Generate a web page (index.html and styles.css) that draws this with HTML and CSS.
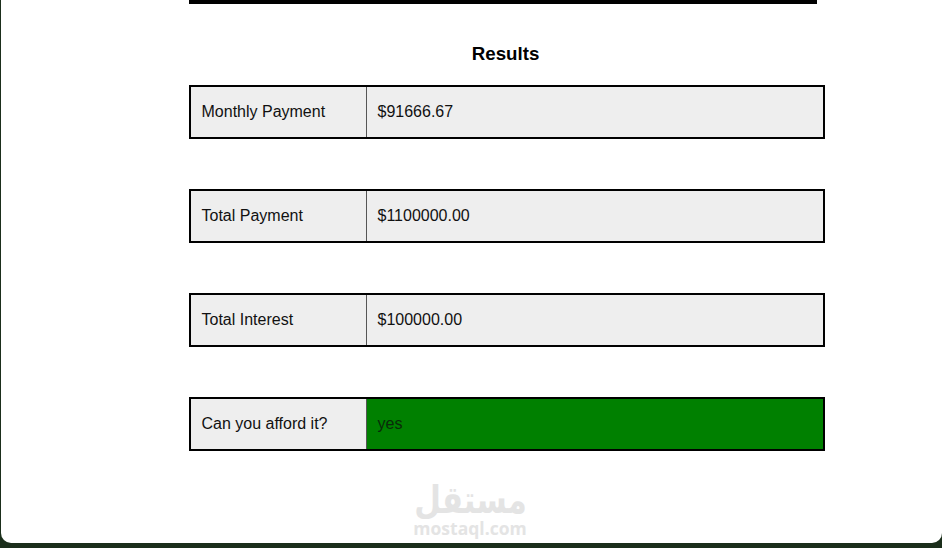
FILE: index.html
```html
<!DOCTYPE html>
<html lang="en">
<head>
<meta charset="utf-8">
<title>Results</title>
<link rel="stylesheet" href="styles.css">
</head>
<body>
<main class="card">
  <section class="content">
    <div class="rule"></div>
    <h2 class="title">Results</h2>
    <div class="row">
      <div class="label">Monthly Payment</div>
      <div class="value">$91666.67</div>
    </div>
    <div class="row">
      <div class="label">Total Payment</div>
      <div class="value">$1100000.00</div>
    </div>
    <div class="row">
      <div class="label">Total Interest</div>
      <div class="value">$100000.00</div>
    </div>
    <div class="row">
      <div class="label">Can you afford it?</div>
      <div class="value value-yes">yes</div>
    </div>
  </section>
  <div class="watermark">
    <div class="wm-ar" lang="ar" dir="rtl">مستقل</div>
    <div class="wm-en">mostaql.com</div>
  </div>
</main>
</body>
</html>
```

FILE: styles.css
```css
* { box-sizing: border-box; }
html, body { margin: 0; height: 100%; }
body {
  background: #1b2e1b;
  padding: 0 0 5px 1px;
  overflow: hidden;
  font-family: "Liberation Sans", Arial, sans-serif;
  color: #111;
}
.card {
  position: relative;
  height: 543px;
  background: #fff;
  border-radius: 0 0 10px 10px;
  padding-left: 188px;
}
.content {
  width: 636px;
  display: flex;
  flex-direction: column;
}
.rule {
  width: 627.5px;
  height: 4px;
  background: #000;
}
.title {
  margin: 39px 0 21px;
  padding-right: 3px;
  font-size: 18.72px;
  line-height: 21px;
  font-weight: 700;
  text-align: center;
  color: #000;
}
.row {
  display: flex;
  height: 54px;
  margin-bottom: 50px;
  border: 2px solid #000;
  background: #eee;
  font-size: 16px;
}
.label {
  width: 176px;
  padding: 0 0 0 10.5px;
  display: flex;
  align-items: center;
  border-right: 1.5px solid #555;
}
.value {
  flex: 1;
  padding: 0 0 0 10.5px;
  display: flex;
  align-items: center;
}
.value-yes { background: #008000; color: #0a2a0a; }
.watermark {
  position: absolute;
  left: 410px;
  top: 482px;
  width: 118px;
  color: #e4e4e4;
  text-align: center;
  display: flex;
  flex-direction: column;
  align-items: center;
}
.wm-ar {
  font-family: "DejaVu Sans", sans-serif;
  font-weight: 700;
  font-size: 38px;
  line-height: 36px;
  transform: scaleX(0.81);
  white-space: nowrap;
}
.wm-en {
  margin-top: 2px;
  font-family: "Open Sans", sans-serif;
  font-size: 17.5px;
  line-height: 16px;
  font-weight: 700;
}
```
